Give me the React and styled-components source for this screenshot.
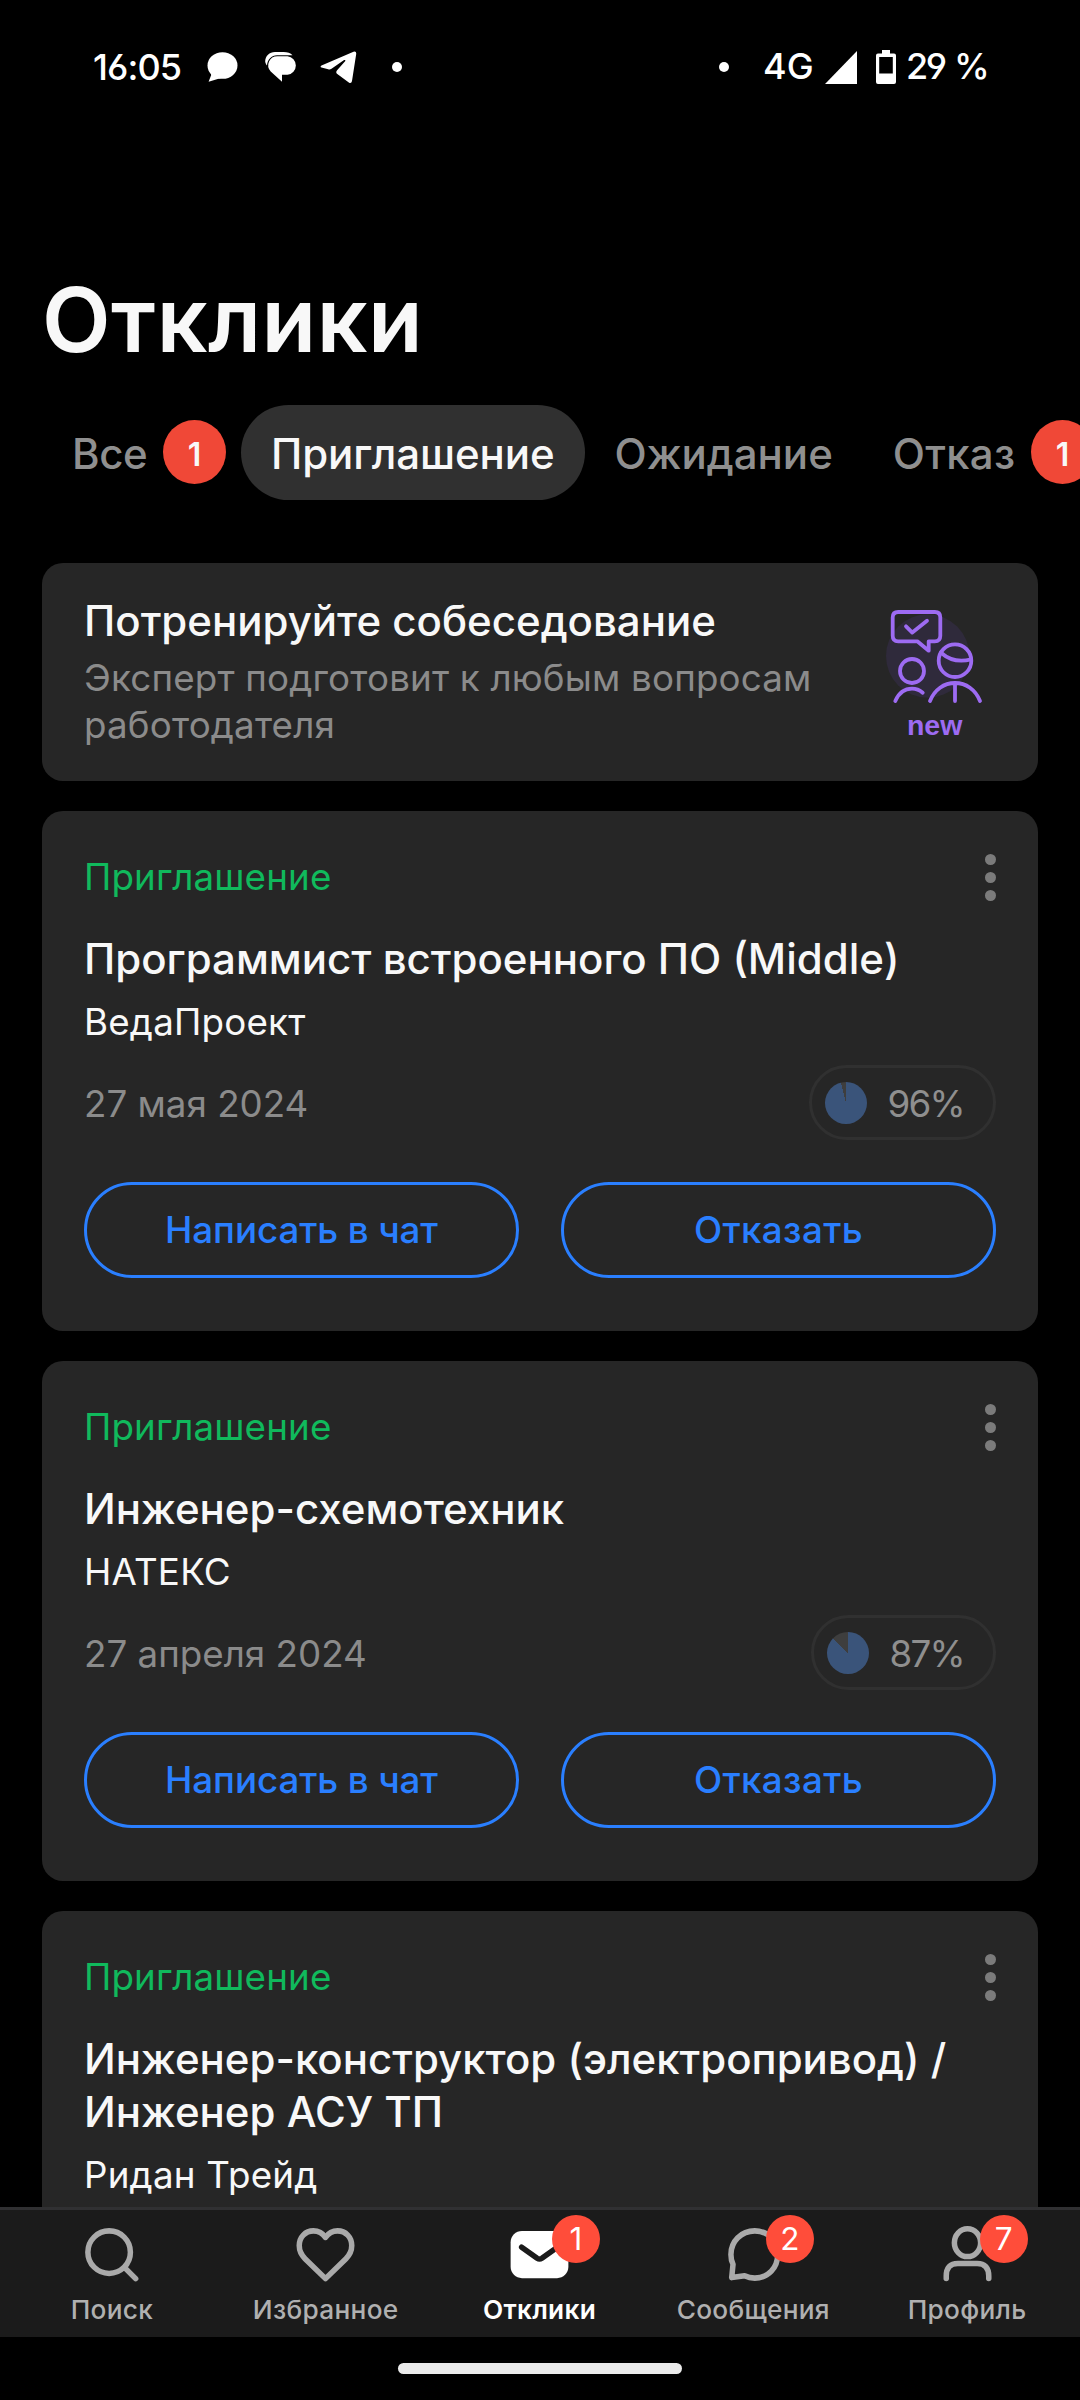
import React from "react";
import styled, { createGlobalStyle } from "styled-components";

const GlobalStyle = createGlobalStyle`
  * {
    box-sizing: border-box;
  }
  body {
    margin: 0;
    background: #000;
    font-family: Inter, "Open Sans", sans-serif;
    color: #f8f8f8;
  }
  svg {
    display: block;
    flex: none;
  }
`;

const Screen = styled.div`
  display: flex;
  flex-direction: column;
  width: 1080px;
  height: 2400px;
  overflow: hidden;
  background: #000;
`;

/* Status bar */
const StatusBar = styled.header`
  display: flex;
  justify-content: space-between;
  align-items: center;
  flex: none;
  height: 134px;
  padding: 0 90px 0 93px;
`;
const StatusGroup = styled.div`
  display: flex;
  align-items: center;
`;
const StatusText = styled.span`
  width: ${(p) => p.$width}px;
  margin-right: ${(p) => p.$gap || 0}px;
  padding-bottom: ${(p) => p.$lift || 0}px;
  color: #fff;
  font-size: 36px;
  font-weight: 500;
  line-height: 44px;
  letter-spacing: ${(p) => p.$spacing}px;
  word-spacing: 2px;
  white-space: nowrap;
  font-feature-settings: "cv03", "cv04";
`;
const StatusIcon = styled.svg`
  margin-right: ${(p) => p.$gap}px;
  fill: #fff;
`;
const StatusDot = styled.i`
  width: 10px;
  height: 10px;
  margin-right: ${(p) => p.$gap || 0}px;
  border-radius: 50%;
  background: #fff;
`;

/* Title and tabs */
const Title = styled.h1`
  flex: none;
  margin: 132px 0 31px 42px;
  font-size: 89.25px;
  font-weight: 600;
  line-height: 108px;
  letter-spacing: 0.5px;
`;
const Tabs = styled.nav`
  display: flex;
  flex: none;
  height: 95px;
  padding-left: 42px;
  margin-bottom: 63px;
  overflow: hidden;
`;
const Tab = styled.div`
  display: flex;
  align-items: center;
  flex: none;
  gap: 15.75px;
  padding: 2px ${(p) => (p.$counted ? 15 : 30)}px 0 30px;
  border-radius: 48px;
  background: ${(p) => (p.$active ? "#303030" : "transparent")};
  color: ${(p) => (p.$active ? "#f8f8f8" : "#8f8f8f")};
  font-size: 42px;
  font-weight: 500;
  line-height: 52px;
  letter-spacing: ${(p) => p.$spacing}px;
`;
const TabBadge = styled.span`
  width: 63px;
  height: 64px;
  padding-top: 5px;
  margin-bottom: 3px;
  border-radius: 50%;
  background: #f04837;
  color: #f8f8f8;
  font-size: 32px;
  font-weight: 600;
  line-height: 59px;
  letter-spacing: 0;
  text-align: center;
`;

/* Cards */
const List = styled.main`
  display: flex;
  flex-direction: column;
  flex: 1;
  gap: 30px;
  min-height: 0;
  padding: 0 42px;
  overflow: hidden;
`;
const Card = styled.section`
  flex: none;
  height: 520px;
  padding: 41px 42px 0;
  border-radius: 21px;
  background: #262626;
`;
const Banner = styled(Card)`
  display: flex;
  justify-content: space-between;
  height: 218px;
  padding-top: 32px;
`;
const BannerTitle = styled.h2`
  margin: 0 0 7px;
  font-size: 42px;
  font-weight: 500;
  line-height: 52px;
`;
const BannerText = styled.p`
  margin: 0;
  color: #8b8b8b;
  font-size: 36.75px;
  line-height: 47px;
  letter-spacing: 0.17px;
`;
const BannerArt = styled.svg`
  margin-top: 10px;
  fill: none;
  stroke: #9d6bf2;
  stroke-width: 3.8;
  stroke-linecap: round;
  stroke-linejoin: round;
  text {
    fill: #9d6bf2;
    stroke: none;
    font: bold 28.5px "Liberation Sans", sans-serif;
  }
`;
const CardTop = styled.div`
  display: flex;
  justify-content: space-between;
  align-items: center;
  height: 50px;
  margin-bottom: 30px;
`;
const State = styled.span`
  color: #10b95c;
  font-size: 36.75px;
  line-height: 50px;
  letter-spacing: 0.15px;
`;
const Dots = styled.div`
  display: flex;
  flex-direction: column;
  gap: 7.4px;
  padding-top: 1px;
  i {
    width: 11px;
    height: 11px;
    border-radius: 50%;
    background: #7b7b7b;
  }
`;
const JobTitle = styled.h2`
  margin: 0 0 13px;
  font-size: 42px;
  font-weight: 500;
  line-height: 53px;
`;
const Company = styled.div`
  font-size: 36.75px;
  line-height: 47px;
  letter-spacing: 0.2px;
`;
const Meta = styled.div`
  display: flex;
  justify-content: space-between;
  align-items: center;
  height: 75px;
  margin: 20px 0 42px;
`;
const DateText = styled.span`
  padding-top: 2px;
  color: #8b8b8b;
  font-size: 36.75px;
  line-height: 47px;
`;
const Chip = styled.div`
  display: flex;
  align-items: center;
  gap: 20px;
  height: 75px;
  padding: 0 29px 0 13px;
  border: 3px solid #303030;
  border-radius: 38px;
  color: #8f8f8f;
  font-size: 36.75px;
  letter-spacing: -1.7px;
  span {
    padding-top: 1px;
  }
`;
const Pie = styled.i`
  width: 42px;
  height: 42px;
  margin-top: 1px;
  border-radius: 50%;
  background: conic-gradient(#3a547a ${(p) => p.$value}%, #3e3e3e 0);
`;
const Actions = styled.div`
  display: flex;
  gap: 42px;
`;
const Button = styled.button`
  flex: 1;
  height: 96px;
  padding: 0 0 2px;
  border: 3px solid #2a7fff;
  border-radius: 48px;
  background: none;
  color: #2a7fff;
  font: 500 36.75px Inter, sans-serif;
  letter-spacing: ${(p) => p.$spacing || 0}px;
`;

/* Bottom navigation */
const BottomNav = styled.footer`
  display: flex;
  flex: none;
  height: 130px;
  padding: 13px 6px 0 5px;
  border-top: 3px solid #303032;
  background: #1b1b1b;
`;
const NavItem = styled.div`
  display: flex;
  flex-direction: column;
  align-items: center;
  flex: 1;
  gap: 8px;
  color: ${(p) => (p.$active ? "#fff" : "#b0b0b0")};
  font-size: 26.25px;
  font-weight: ${(p) => (p.$active ? 600 : 500)};
  line-height: 32px;
  letter-spacing: 0.3px;
`;
const NavIcon = styled.div`
  position: relative;
  width: 63px;
  height: 63px;
  svg {
    fill: none;
    stroke: #aaa;
    stroke-width: 2.1;
    stroke-linecap: round;
    stroke-linejoin: round;
  }
`;
const NavBadge = styled.span`
  position: absolute;
  top: -8px;
  left: 44px;
  width: 48px;
  height: 48px;
  border-radius: 50%;
  background: #ff4d3a;
  color: #fff;
  font-size: 31.5px;
  font-weight: 400;
  line-height: 48px;
  letter-spacing: 0;
  text-align: center;
`;
const HomeArea = styled.div`
  display: flex;
  justify-content: center;
  flex: none;
  height: 63px;
  padding-top: 26px;
`;
const HomeBar = styled.div`
  width: 284px;
  height: 11px;
  border-radius: 6px;
  background: #ebebeb;
`;

const tabs = [
  { label: "Все", count: 1, spacing: -0.4 },
  { label: "Приглашение", active: true, spacing: -0.08 },
  { label: "Ожидание", spacing: 0 },
  { label: "Отказ", count: 1, spacing: 0.25 },
];

const jobs = [
  {
    title: "Программист встроенного ПО (Middle)",
    company: "ВедаПроект",
    date: "27 мая 2024",
    match: 96,
  },
  {
    title: "Инженер-схемотехник",
    company: "НАТЕКС",
    date: "27 апреля 2024",
    match: 87,
  },
  {
    title: "Инженер-конструктор (электропривод) / Инженер АСУ ТП",
    company: "Ридан Трейд",
  },
];

const navItems = [
  {
    label: "Поиск",
    icon: (
      <>
        <circle cx="11.1" cy="11.1" r="8.1" />
        <path d="M17 17l4.2 4.2" />
      </>
    ),
  },
  {
    label: "Избранное",
    icon: (
      <path d="M12 5.5C10.9 3.9 9.3 3 7.4 3 4.3 3 2 5.4 2 8.6c0 2.1.7 3.5 2.2 5L12 21.2l7.8-7.6c1.5-1.5 2.2-2.9 2.2-5C22 5.4 19.7 3 16.6 3 14.7 3 13.1 3.9 12 5.5z" />
    ),
  },
  {
    label: "Отклики",
    active: true,
    count: 1,
    icon: (
      <>
        <rect x="1" y="3" width="22" height="18" rx="4.3" fill="#fff" stroke="none" />
        <path d="M5.2 9.2l5.9 4.2q.9.6 1.8 0l5.9-4.2" stroke="#1b1b1b" />
      </>
    ),
  },
  {
    label: "Сообщения",
    count: 2,
    icon: (
      <path d="M12.5 3c5.2 0 8.7 4 8.7 9s-3.5 9-8.7 9c-1.5 0-2.7-.3-3.9-.9l-4.9.7.5-5.1C3.6 14.6 3.4 13.3 3.4 12c0-5 3.9-9 9.1-9z" />
    ),
  },
  {
    label: "Профиль",
    count: 7,
    icon: (
      <>
        <ellipse cx="12" cy="7.5" rx="5" ry="5.3" />
        <path d="M3.9 21.1v-.9c0-3.1 1.5-4.8 4.4-4.8h7.4c2.9 0 4.4 1.7 4.4 4.8v.9" />
      </>
    ),
  },
];

const JobCard = ({ job }) => (
  <Card>
    <CardTop>
      <State>Приглашение</State>
      <Dots>
        <i />
        <i />
        <i />
      </Dots>
    </CardTop>
    <JobTitle>{job.title}</JobTitle>
    <Company>{job.company}</Company>
    {job.date && (
      <>
        <Meta>
          <DateText>{job.date}</DateText>
          <Chip>
            <Pie $value={job.match} />
            <span>{job.match}%</span>
          </Chip>
        </Meta>
        <Actions>
          <Button $spacing={-0.1}>Написать в чат</Button>
          <Button $spacing={0.4}>Отказать</Button>
        </Actions>
      </>
    )}
  </Card>
);

const App = () => {
  return (
    <Screen>
      <GlobalStyle />
      <StatusBar>
        <StatusGroup>
          <StatusText $width={88} $gap={26} $spacing={-0.9}>
            16:05
          </StatusText>
          <StatusIcon $gap={27} width="31" height="31" viewBox="0 0 31 31">
            <ellipse cx="15.5" cy="13.5" rx="15" ry="13.3" />
            <path d="M3 19l1.2 4-2.6 6.8L14 26z" />
          </StatusIcon>
          <StatusIcon $gap={23} width="32" height="30" viewBox="0 0 32 30">
            <path d="M10 0H18.5C22.5 0 25.5 1.2 27.5 3.2H12C6.5 3.2 2.3 7.5 2 13.5.8 12 .2 10.5.2 9.5.2 4 4.5 0 10 0z" />
            <path d="M12.5 4.2H22.5A9.3 9.3 0 0 1 22.5 22.7H17V29.8L5.7 19.5A9.1 9.1 0 0 1 12.5 4.2z" />
          </StatusIcon>
          <StatusIcon $gap={35} width="37" height="33" viewBox="0 0 37 33">
            <path d="M1.5 14.6L33.5.7q3-.9 2.7 2.3L32 30q-.6 3-3.2 1.5L17.3 23q-2-1.6-.2-3.7L25.3 10q.4-1.5-1.2-.9L11.5 17.8q-1.5 1-3.3.5L1.5 16.5q-1.8-.8 0-1.9z" />
          </StatusIcon>
          <StatusDot />
        </StatusGroup>
        <StatusGroup>
          <StatusDot $gap={34} />
          <StatusText $width={51} $gap={11} $spacing={0.2} $lift={2}>
            4G
          </StatusText>
          <StatusIcon $gap={19} width="32" height="33" viewBox="0 0 32 33">
            <path d="M32 0v33H0z" />
          </StatusIcon>
          <StatusIcon $gap={10} width="20" height="34" viewBox="0 0 20 34">
            <path
              fillRule="evenodd"
              d="M6 0h8v3.5h4q2 0 2 2V32q0 2-2 2H2q-2 0-2-2V5.5q0-2 2-2h4zM3.2 7v16.5h13.6V7z"
            />
          </StatusIcon>
          <StatusText $width={84} $spacing={-2.4} $lift={2}>
            29 %
          </StatusText>
        </StatusGroup>
      </StatusBar>

      <Title>Отклики</Title>
      <Tabs>
        {tabs.map((t) => (
          <Tab
            key={t.label}
            $active={t.active}
            $counted={!!t.count}
            $spacing={t.spacing}
          >
            {t.label}
            {t.count && <TabBadge>{t.count}</TabBadge>}
          </Tab>
        ))}
      </Tabs>

      <List>
        <Banner>
          <div>
            <BannerTitle>Потренируйте собеседование</BannerTitle>
            <BannerText>
              Эксперт подготовит к любым вопросам
              <br />
              работодателя
            </BannerText>
          </div>
          <BannerArt width="110" height="140" viewBox="26 25 110 140">
            <circle cx="67.7" cy="76" r="41.7" fill="#2f2a3b" stroke="none" />
            <path d="M38.2 32h36.600q5.500 0 5.500 5.500v18.300q0 5.500-5.500 5.500h-6.100v9.400L57.300 61.300H38.200q-5.500 0-5.500-5.500V37.500q0-5.500 5.500-5.500z" />
            <path d="M46 46.300l6.300 6.300L67 40.700" />
            <circle cx="52" cy="91" r="12" />
            <path d="M35.300 121c3.300-7.500 9.500-12.300 16.700-12.300 3.900 0 7.500 1.300 10.700 4" />
            <circle cx="95" cy="80.700" r="16.300" />
            <path d="M81 72.700Q94 84 111 79.300M70 121c4.500-11.500 14-18 25-18s20.500 6.500 25 18M95 103v18" />
            <text x="74.6" y="154.5" textAnchor="middle">
              new
            </text>
          </BannerArt>
        </Banner>
        {jobs.map((job) => (
          <JobCard key={job.title} job={job} />
        ))}
      </List>

      <BottomNav>
        {navItems.map((n) => (
          <NavItem key={n.label} $active={n.active}>
            <NavIcon>
              <svg width="63" height="63" viewBox="0 0 24 24">
                {n.icon}
              </svg>
              {n.count && <NavBadge>{n.count}</NavBadge>}
            </NavIcon>
            <span>{n.label}</span>
          </NavItem>
        ))}
      </BottomNav>
      <HomeArea>
        <HomeBar />
      </HomeArea>
    </Screen>
  );
};

export default App;
